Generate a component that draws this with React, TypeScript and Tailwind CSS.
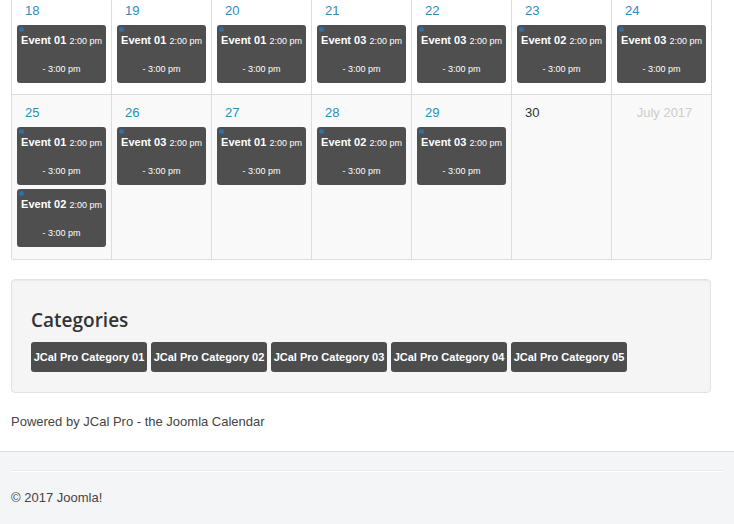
import React from "react"

type Ev = { title: string }
type Day = { label: string; kind?: "link" | "plain" | "muted"; events: Ev[] }

const week1: Day[] = [
  { label: "18", events: [{ title: "Event 01" }] },
  { label: "19", events: [{ title: "Event 01" }] },
  { label: "20", events: [{ title: "Event 01" }] },
  { label: "21", events: [{ title: "Event 03" }] },
  { label: "22", events: [{ title: "Event 03" }] },
  { label: "23", events: [{ title: "Event 02" }] },
  { label: "24", events: [{ title: "Event 03" }] },
]

const week2: Day[] = [
  { label: "25", events: [{ title: "Event 01" }, { title: "Event 02" }] },
  { label: "26", events: [{ title: "Event 03" }] },
  { label: "27", events: [{ title: "Event 01" }] },
  { label: "28", events: [{ title: "Event 02" }] },
  { label: "29", events: [{ title: "Event 03" }] },
  { label: "30", kind: "plain", events: [] },
  { label: "July 2017", kind: "muted", events: [] },
]

const categories = [
  "JCal Pro Category 01",
  "JCal Pro Category 02",
  "JCal Pro Category 03",
  "JCal Pro Category 04",
  "JCal Pro Category 05",
]

function EventCard({ ev }: { ev: Ev }) {
  return (
    <div className="relative ml-[5px] mr-[5px] h-[58px] rounded-[3px] bg-[#4f4f4f] px-[2px] pt-[2px] text-center text-[11px] leading-[27px] text-white">
      <span className="absolute left-[2px] top-[2px] h-[5px] w-[5px] rounded-full bg-[#2f6fa8]" />
      <span className="font-bold">{ev.title}</span>{" "}
      <span className="text-[9px]">2:00 pm - 3:00 pm</span>
    </div>
  )
}

function DayCell({ day }: { day: Day }) {
  const color =
    day.kind === "muted"
      ? "text-[#cccccc] text-center pl-[6px]"
      : day.kind === "plain"
        ? "text-[#333333] pl-[13px]"
        : "text-[#2a8dc0] pl-[13px]"
  return (
    <div className="flex flex-col border-l border-[#dddddd]">
      <div className={`h-[32px] pt-[10px] text-[13px] leading-[16px] ${color}`}>{day.label}</div>
      <div className="flex flex-col gap-[4px] pb-[11px]">
        {day.events.map((ev, i) => (
          <EventCard key={i} ev={ev} />
        ))}
      </div>
    </div>
  )
}

function WeekRow({ days, className }: { days: Day[]; className: string }) {
  return (
    <div className={`grid grid-cols-7 ${className}`}>
      {days.map((d, i) => (
        <DayCell key={i} day={d} />
      ))}
    </div>
  )
}

export default function App() {
  return (
    <div className="min-h-[524px] bg-white font-['Liberation_Sans',Arial,sans-serif] text-[#333333]">
      <div className="px-[11px]">
        <div className="-mt-[7px] w-[701px] rounded-b-[3px] border-r border-b border-[#dddddd] bg-[#f9f9f9]">
          <WeekRow days={week1} className="h-[101px] bg-white" />
          <WeekRow days={week2} className="h-[165px] border-t border-[#dddddd]" />
        </div>

        <div className="mt-[19px] h-[114px] w-[700px] rounded-[4px] border border-[#e3e3e3] bg-[#f5f5f5] px-[19px] pt-[28px] shadow-[inset_0_1px_1px_rgba(0,0,0,0.05)]">
          <h3 className="font-['Open_Sans',sans-serif] text-[19px] font-semibold leading-[24px] text-[#333333]">
            Categories
          </h3>
          <div className="mt-[10px] flex gap-[4px]">
            {categories.map((c) => (
              <span
                key={c}
                className="flex h-[30px] w-[116px] shrink-0 items-center justify-center rounded-[3px] bg-[#4d4d4d] text-[11px] font-bold text-white"
              >
                {c}
              </span>
            ))}
          </div>
        </div>

        <p className="mt-[20px] text-[13px] leading-[18px] text-[#444444]">
          Powered by JCal Pro - the Joomla Calendar
        </p>
      </div>

      <footer className="mt-[20px] h-[73px] border-t border-[#dcdcdc] bg-[#f4f5f7] px-[11px] pt-[18px]">
        <div className="border-t border-[#e6e8ec] shadow-[0_1px_0_#ffffff]" />
        <p className="mt-[18px] text-[13px] leading-[18px] text-[#444444]">© 2017 Joomla!</p>
      </footer>
    </div>
  )
}
